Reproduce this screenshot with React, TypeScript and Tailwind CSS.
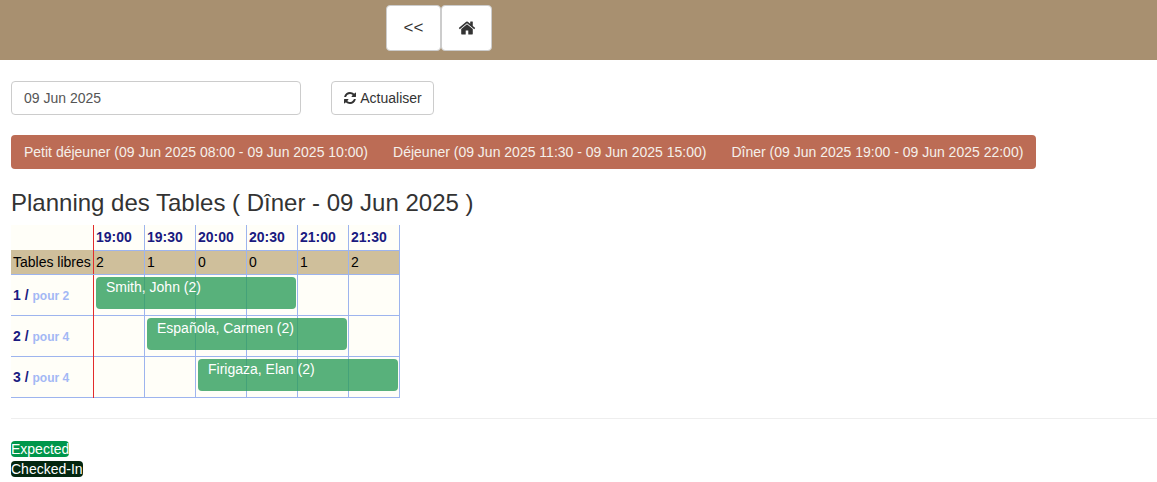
const times = ['19:00', '19:30', '20:00', '20:30', '21:00', '21:30'];
const free = [2, 1, 0, 0, 1, 2];

const rows = [
    { table: 1, seats: 2, name: 'Smith, John (2)', left: 'left-[85px]' },
    { table: 2, seats: 4, name: 'Española, Carmen (2)', left: 'left-[136px]' },
    { table: 3, seats: 4, name: 'Firigaza, Elan (2)', left: 'left-[187px]' },
];

const cols = 'grid grid-cols-[82px_repeat(6,51px)]';
const blue = 'border-[#9db4ee]';

// first hour column has the red "now" line, the rest are plain blue
const lineClass = (i: number) => (i === 0 ? 'border-l border-l-[#e22b2b]' : 'border-l border-l-[#9db4ee]');

function HomeIcon() {
    return (
        <svg viewBox="0 0 1792 1792" className="h-[18px] w-[18px]" fill="currentColor">
            <path d="M1472 992v480q0 26-19 45t-45 19h-384v-384h-256v384h-384q-26 0-45-19t-19-45v-480q0-1 .5-3t.5-3l575-474 575 474q1 2 1 6zm223-69l-62 74q-8 9-21 11h-3q-13 0-21-7l-692-577-692 577q-12 8-24 7-13-2-21-11l-62-74q-8-10-7-23.5t11-21.5l719-599q32-26 76-26t76 26l244 204v-195q0-14 9-23t23-9h192q14 0 23 9t9 23v408l219 182q10 8 11 21.5t-7 23.5z" />
        </svg>
    );
}

function RefreshIcon() {
    return (
        <svg viewBox="0 0 1792 1792" className="h-[14px] w-[14px]" fill="currentColor">
            <path d="M1639 1056q0 5-1 7-64 268-268 434.5t-478 166.5q-146 0-282.5-55t-243.5-157l-129 129q-19 19-45 19t-45-19-19-45v-448q0-26 19-45t45-19h448q26 0 45 19t19 45-19 45l-137 137q71 66 161 102t187 36q134 0 250-65t186-179q11-17 53-117 8-23 30-23h192q13 0 22.5 9.5t9.5 22.5zm25-800v448q0 26-19 45t-45 19h-448q-26 0-45-19t-19-45 19-45l138-138q-148-137-349-137-134 0-250 65t-186 179q-11 17-53 117-8 23-30 23h-199q-13 0-22.5-9.5t-9.5-22.5v-7q65-268 270-434.5t480-166.5q146 0 284 55.5t245 156.5l130-129q19-19 45-19t45 19 19 45z" />
        </svg>
    );
}

export default function App() {
    return (
        <div className="min-h-[482px] bg-white text-[14px] text-[#333] font-['Liberation_Sans',Arial,sans-serif]">
            {/* Top bar */}
            <div className="flex h-[60px] items-start bg-[#a89070] pt-[5px] pl-[386px]">
                <button className="flex h-[46px] w-[55px] items-center justify-center rounded border border-[#ccc] bg-white text-[17px]">&lt;&lt;</button>
                <button className="flex h-[46px] w-[51px] items-center justify-center rounded border border-[#ccc] bg-white">
                    <HomeIcon />
                </button>
            </div>

            <div className="pl-[11px]">
                {/* Date filter */}
                <div className="mt-[21px] flex gap-[30px]">
                    <input
                        readOnly
                        value="09 Jun 2025"
                        className="h-[34px] w-[290px] rounded border border-[#ccc] px-3 text-[14px] text-[#555]"
                    />
                    <button className="flex h-[34px] w-[103px] items-center justify-center gap-[3px] rounded border border-[#ccc] bg-white text-[14px]">
                        <RefreshIcon />
                        Actualiser
                    </button>
                </div>

                {/* Services */}
                <div className="mt-[20px] flex h-[34px] w-[1025px] items-center gap-[25px] rounded bg-[#bc6c55] px-[13px] text-[14px] whitespace-nowrap text-[#f5f0ea]">
                    <span>Petit déjeuner (09 Jun 2025 08:00 - 09 Jun 2025 10:00)</span>
                    <span>Déjeuner (09 Jun 2025 11:30 - 09 Jun 2025 15:00)</span>
                    <span>Dîner (09 Jun 2025 19:00 - 09 Jun 2025 22:00)</span>
                </div>

                <h3 className="mt-[20px] text-[24px] leading-[28px] font-normal">Planning des Tables ( Dîner - 09 Jun 2025 )</h3>

                {/* Planning */}
                <div className={`mt-[8px] w-[389px] border-r ${blue} bg-[#fffef8] text-[14px] text-black`}>
                    <div className={`${cols} h-[25px] font-bold text-[#1a1a80]`}>
                        <div />
                        {times.map((t, i) => (
                            <div key={t} className={`${lineClass(i)} border-b border-b-[#9db4ee] pl-[2px] leading-[25px]`}>{t}</div>
                        ))}
                    </div>
                    <div className={`${cols} h-[25px] border-b ${blue} bg-[#cfbf9b] leading-[24px]`}>
                        <div className="pl-[2px] whitespace-nowrap">Tables libres</div>
                        {free.map((n, i) => (
                            <div key={i} className={`${lineClass(i)} pl-[2px]`}>{n}</div>
                        ))}
                    </div>
                    {rows.map(row => (
                        <div key={row.table} className={`${cols} relative h-[41px] border-b ${blue}`}>
                            <div className="pl-[2px] text-[14px] leading-[40px] font-bold text-[#1a1a80]">
                                {row.table} / <span className="text-[12px] text-[#a3b8f5]">pour {row.seats}</span>
                            </div>
                            {times.map((t, i) => (
                                <div key={t} className={lineClass(i)} />
                            ))}
                            <div className={`absolute top-[2px] ${row.left} h-[32px] w-[200px] rounded bg-[#2e9e5b]/80 pl-[10px] text-[14px] leading-[20px] text-white`}>
                                {row.name}
                            </div>
                        </div>
                    ))}
                </div>

                <hr className="mt-[20px] border-[#eee]" />

                {/* Legend */}
                <div className="mt-[22px] flex flex-col items-start gap-[4px] text-[14px] leading-[16px] text-white">
                    <span className="rounded bg-[#00964b]">Expected</span>
                    <span className="rounded bg-[#03260f]">Checked-In</span>
                </div>
            </div>
        </div>
    );
}
